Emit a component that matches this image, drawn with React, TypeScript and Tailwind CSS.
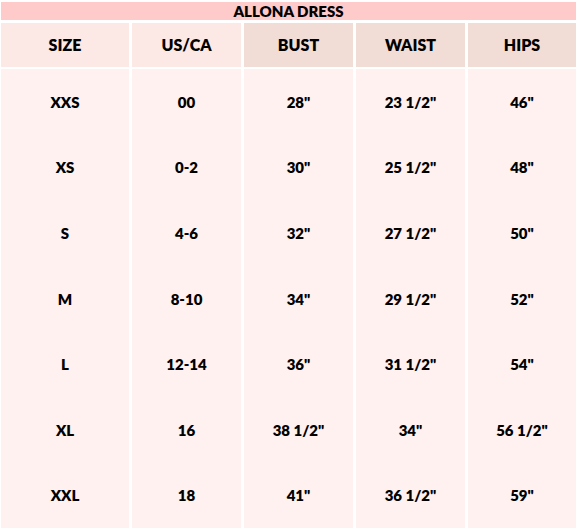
import React from "react";

const rows = [
  ["XXS", "00", '28"', '23 1/2"', '46"'],
  ["XS", "0-2", '30"', '25 1/2"', '48"'],
  ["S", "4-6", '32"', '27 1/2"', '50"'],
  ["M", "8-10", '34"', '29 1/2"', '52"'],
  ["L", "12-14", '36"', '31 1/2"', '54"'],
  ["XL", "16", '38 1/2"', '34"', '56 1/2"'],
  ["XXL", "18", '41"', '36 1/2"', '59"'],
];

const headers = ["SIZE", "US/CA", "BUST", "WAIST", "HIPS"];

export default function App() {
  return (
    <div
      className="w-[577px] h-[530px] bg-white pl-[1px] pr-[1px] pt-[2px] text-black font-extrabold"
      style={{ fontFamily: "Lato, 'Liberation Sans', sans-serif" }}
    >
      <div className="h-[18px] bg-[#ffcaca] flex items-center justify-center text-[15px] leading-none">
        ALLONA DRESS
      </div>
      <div className="mt-[3px] grid grid-cols-[128px_109px_109px_109px_108px] gap-x-[3px] h-[44px]">
        {headers.map((h, i) => (
          <div
            key={h}
            className={
              "flex items-center justify-center text-[16px] leading-none " +
              (i < 2 ? "bg-[#fce9e6]" : "bg-[#f2ddd6]")
            }
          >
            {h}
          </div>
        ))}
      </div>
      <div className="mt-[2px] grid grid-cols-[128px_109px_109px_109px_108px] gap-x-[3px] h-[459px]">
        {[0, 1, 2, 3, 4].map((c) => (
          <div key={c} className="bg-[#fff1f0] flex flex-col">
            {rows.map((r, ri) => (
              <div
                key={ri}
                className="flex-1 flex items-center justify-center text-[15px] leading-none pt-[1px]"
              >
                {r[c]}
              </div>
            ))}
          </div>
        ))}
      </div>
    </div>
  );
}
